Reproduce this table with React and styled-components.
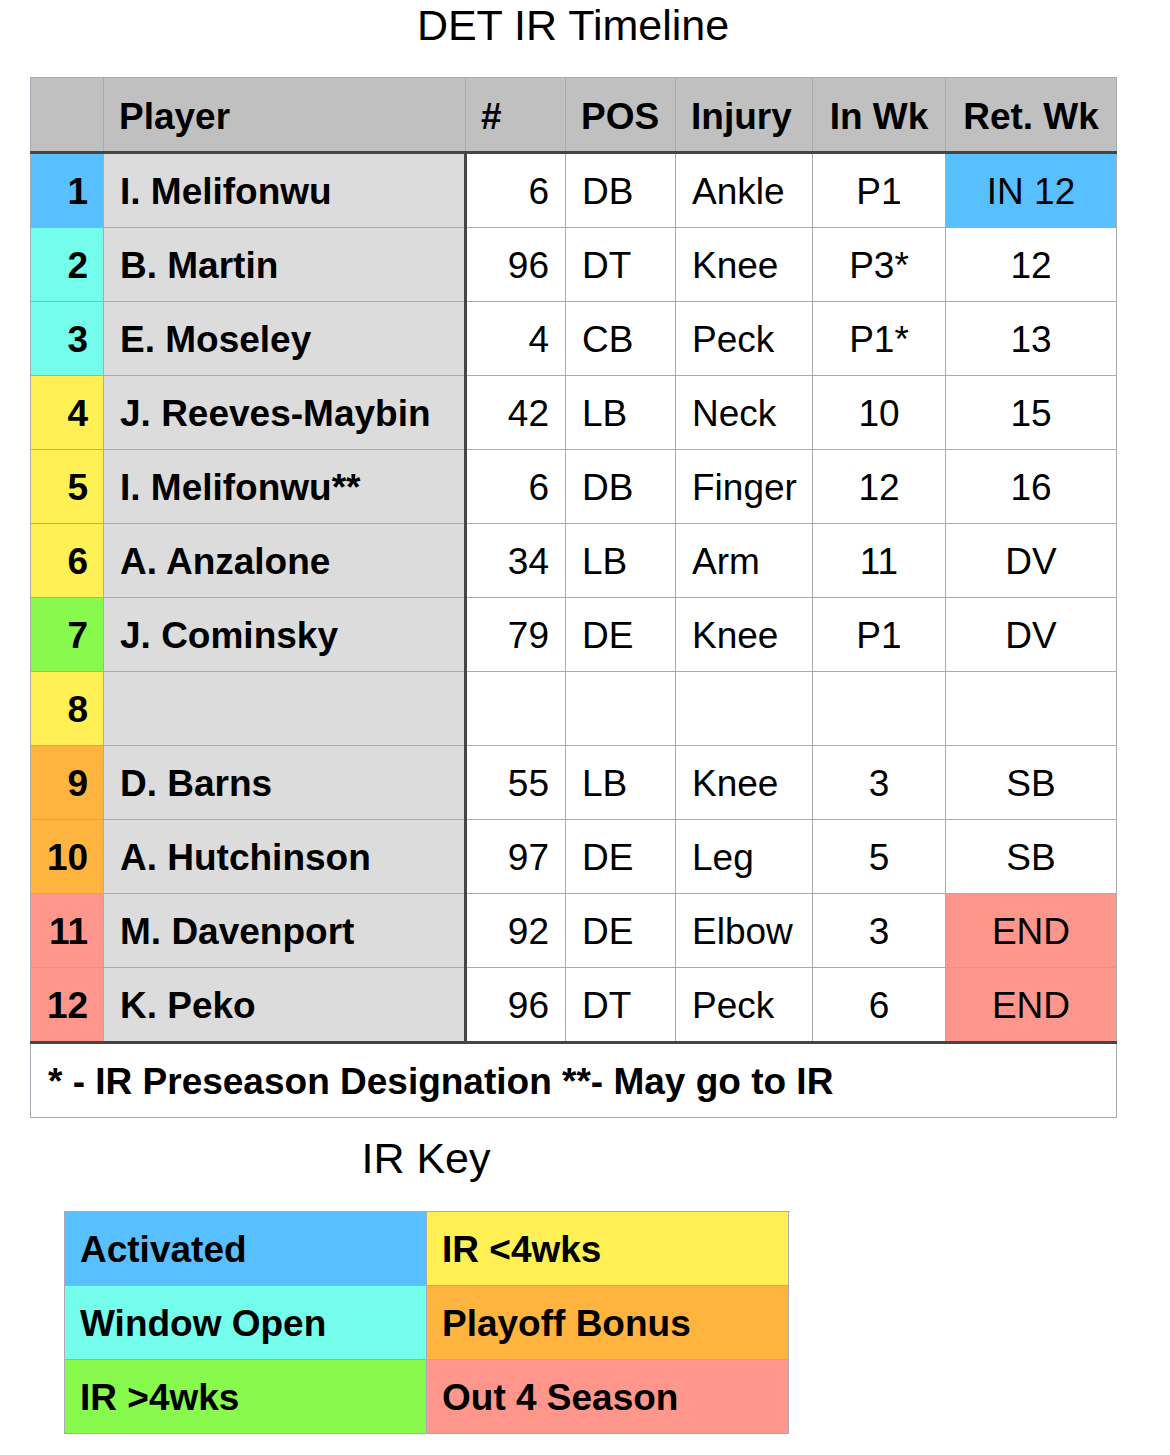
import styled, { createGlobalStyle } from 'styled-components';

const GlobalStyle = createGlobalStyle`
  body {
    margin: 0;
    background: #fff;
    font-family: "Liberation Sans", Arial, sans-serif;
    color: #000;
  }
`;

const COLORS = {
  blue: '#58c0fe',
  cyan: '#74fdea',
  yellow: '#fff056',
  green: '#88fa4e',
  orange: '#feb43f',
  salmon: '#ff968c',
};

const LINE = '#aaaab4';
const DARK = '#454545';

const Sheet = styled.div`
  width: 1086px;
  margin-left: 30px;
`;

const Title = styled.h1`
  margin: 0;
  height: 77px;
  font-size: 43px;
  font-weight: normal;
  line-height: 50px;
  text-align: center;
`;

const Table = styled.table`
  width: 1086px;
  table-layout: fixed;
  border-collapse: collapse;
  font-size: 37px;
`;

const Row = styled.tr`
  height: 74px;
`;

const Cell = styled.td`
  padding: 3px 16px 0;
  height: 70px;
  border: 1px solid ${LINE};
  background: ${(p) => p.$bg || '#fff'};
  text-align: ${(p) => p.$align || 'left'};
  font-weight: ${(p) => (p.$bold ? 'bold' : 'normal')};
  white-space: nowrap;
  vertical-align: middle;
`;

const HeadCell = styled.th`
  padding: 4px 0 0;
  padding-left: ${(p) => (p.$align === 'center' ? '0' : '15px')};
  height: 69px;
  border: 1px solid ${LINE};
  border-bottom: 3px solid ${DARK};
  background: #bfc0bf;
  text-align: ${(p) => p.$align || 'left'};
  font-weight: bold;
  white-space: nowrap;
`;

const NumCell = styled(Cell)`
  font-weight: bold;
  text-align: right;
  padding-right: 15px;
`;

const PlayerCell = styled(Cell)`
  font-weight: bold;
  background: #dcdcdc;
  border-right: 3px solid ${DARK};
`;

const NoteCell = styled.td`
  height: 70px;
  padding: 3px 17px 0;
  border: 1px solid ${LINE};
  border-top: 3px solid ${DARK};
  font-weight: bold;
`;

const KeyTitle = styled.h2`
  margin: 15px 0 28px 34px;
  width: 724px;
  font-size: 43px;
  font-weight: normal;
  line-height: 50px;
  text-align: center;
`;

const KeyGrid = styled.div`
  display: grid;
  grid-template-columns: 362px 362px;
  grid-template-rows: repeat(3, 74px);
  grid-auto-flow: column;
  width: 725px;
  margin-left: 34px;
  border-top: 1px solid ${LINE};
  border-left: 1px solid ${LINE};
`;

const KeyItem = styled.div`
  display: flex;
  align-items: center;
  padding: 3px 0 0 15px;
  background: ${(p) => p.$bg};
  border-right: 1px solid ${LINE};
  border-bottom: 1px solid ${LINE};
  font-size: 37px;
  font-weight: bold;
`;

const players = [
  { n: 1, c: 'blue', name: 'I. Melifonwu', no: '6', pos: 'DB', inj: 'Ankle', inWk: 'P1', ret: 'IN 12', retBg: 'blue' },
  { n: 2, c: 'cyan', name: 'B. Martin', no: '96', pos: 'DT', inj: 'Knee', inWk: 'P3*', ret: '12' },
  { n: 3, c: 'cyan', name: 'E. Moseley', no: '4', pos: 'CB', inj: 'Peck', inWk: 'P1*', ret: '13' },
  { n: 4, c: 'yellow', name: 'J. Reeves-Maybin', no: '42', pos: 'LB', inj: 'Neck', inWk: '10', ret: '15' },
  { n: 5, c: 'yellow', name: 'I. Melifonwu**', no: '6', pos: 'DB', inj: 'Finger', inWk: '12', ret: '16' },
  { n: 6, c: 'yellow', name: 'A. Anzalone', no: '34', pos: 'LB', inj: 'Arm', inWk: '11', ret: 'DV' },
  { n: 7, c: 'green', name: 'J. Cominsky', no: '79', pos: 'DE', inj: 'Knee', inWk: 'P1', ret: 'DV' },
  { n: 8, c: 'yellow', name: '', no: '', pos: '', inj: '', inWk: '', ret: '' },
  { n: 9, c: 'orange', name: 'D. Barns', no: '55', pos: 'LB', inj: 'Knee', inWk: '3', ret: 'SB' },
  { n: 10, c: 'orange', name: 'A. Hutchinson', no: '97', pos: 'DE', inj: 'Leg', inWk: '5', ret: 'SB' },
  { n: 11, c: 'salmon', name: 'M. Davenport', no: '92', pos: 'DE', inj: 'Elbow', inWk: '3', ret: 'END', retBg: 'salmon' },
  { n: 12, c: 'salmon', name: 'K. Peko', no: '96', pos: 'DT', inj: 'Peck', inWk: '6', ret: 'END', retBg: 'salmon' },
];

const legend = [
  { label: 'Activated', c: 'blue' },
  { label: 'Window Open', c: 'cyan' },
  { label: 'IR >4wks', c: 'green' },
  { label: 'IR <4wks', c: 'yellow' },
  { label: 'Playoff Bonus', c: 'orange' },
  { label: 'Out 4 Season', c: 'salmon' },
];

export default function App() {
  return (
    <Sheet>
      <GlobalStyle />
      <Title>DET IR Timeline</Title>
      <Table>
        <colgroup>
          <col style={{ width: 73 }} />
          <col style={{ width: 362 }} />
          <col style={{ width: 100 }} />
          <col style={{ width: 110 }} />
          <col style={{ width: 137 }} />
          <col style={{ width: 133 }} />
          <col style={{ width: 171 }} />
        </colgroup>
        <thead>
          <Row>
            <HeadCell />
            <HeadCell>Player</HeadCell>
            <HeadCell>#</HeadCell>
            <HeadCell>POS</HeadCell>
            <HeadCell>Injury</HeadCell>
            <HeadCell $align="center">In Wk</HeadCell>
            <HeadCell $align="center">Ret. Wk</HeadCell>
          </Row>
        </thead>
        <tbody>
          {players.map((p) => (
            <Row key={p.n}>
              <NumCell $bg={COLORS[p.c]}>{p.n}</NumCell>
              <PlayerCell>{p.name}</PlayerCell>
              <Cell $align="right">{p.no}</Cell>
              <Cell>{p.pos}</Cell>
              <Cell>{p.inj}</Cell>
              <Cell $align="center">{p.inWk}</Cell>
              <Cell $align="center" $bg={p.retBg && COLORS[p.retBg]}>
                {p.ret}
              </Cell>
            </Row>
          ))}
          <Row>
            <NoteCell colSpan={7}>
              * - IR Preseason Designation **- May go to IR
            </NoteCell>
          </Row>
        </tbody>
      </Table>
      <KeyTitle>IR Key</KeyTitle>
      <KeyGrid>
        {legend.map((k) => (
          <KeyItem key={k.label} $bg={COLORS[k.c]}>
            {k.label}
          </KeyItem>
        ))}
      </KeyGrid>
    </Sheet>
  );
}
